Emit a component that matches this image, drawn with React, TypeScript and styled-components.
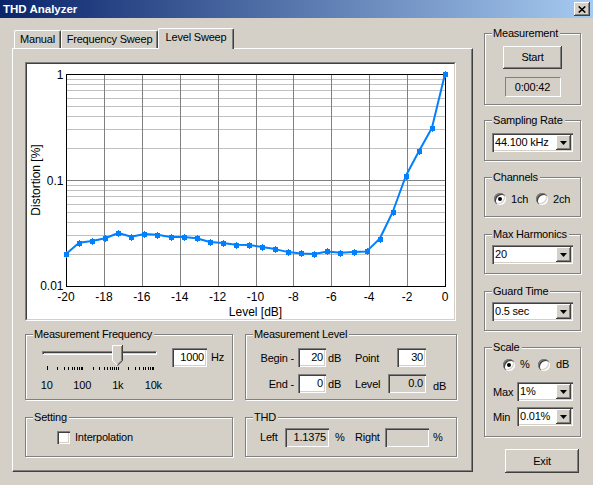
import React from "react";
import styled, { createGlobalStyle } from "styled-components";

const FACE = "#D4D0C8";
const SHADOW = "#808080";
const DARK = "#404040";
const HILITE = "#FFFFFF";

const SUNKEN = `inset 1px 1px ${SHADOW}, inset 2px 2px ${DARK}, inset -1px -1px ${HILITE}, inset -2px -2px ${FACE}`;
const RAISED = `inset -1px -1px ${DARK}, inset 1px 1px ${HILITE}, inset -2px -2px ${SHADOW}, inset 2px 2px ${FACE}`;

const GlobalStyle = createGlobalStyle`
  html, body { margin: 0; padding: 0; background: ${FACE}; }
  body {
    font-family: "Liberation Sans", Arial, sans-serif;
    font-size: 11px;
    letter-spacing: -0.2px;
    color: #000;
  }
  *, *::before, *::after { box-sizing: border-box; }
`;

const Window = styled.div`
  width: 593px;
  height: 485px;
  display: flex;
  flex-direction: column;
  background: ${FACE};
  overflow: hidden;
`;

const TitleBar = styled.div`
  flex: none;
  height: 18px;
  display: flex;
  align-items: center;
  justify-content: space-between;
  padding: 0 3px 0 3px;
  background: linear-gradient(to right, #0a246a 0%, #a6caf0 100%);
`;

const TitleText = styled.span`
  color: #fff;
  font-weight: bold;
  font-size: 11.5px;
  letter-spacing: 0;
  line-height: 14px;
`;

const CaptionButton = styled.div`
  width: 16px;
  height: 14px;
  background: ${FACE};
  box-shadow: inset -1px -1px ${DARK}, inset 1px 1px ${HILITE}, inset -2px -2px ${SHADOW};
  display: flex;
  align-items: center;
  justify-content: center;
`;

const Main = styled.div`
  flex: 1;
  display: flex;
  align-items: flex-start;
  padding: 10px 0 0 12px;
  gap: 11px;
`;

const LeftCol = styled.div`
  width: 461px;
  display: flex;
  flex-direction: column;
`;

const TabStrip = styled.div`
  height: 20px;
  display: flex;
  align-items: flex-end;
  padding-left: 2px;
  position: relative;
  z-index: 1;
`;

const Tab = styled.div<{ $w: number; $active?: boolean }>`
  width: ${(p) => p.$w}px;
  height: ${(p) => (p.$active ? 21 : 18)}px;
  margin-bottom: ${(p) => (p.$active ? -1 : 0)}px;
  background: ${FACE};
  border-top: 1px solid ${HILITE};
  border-left: 1px solid ${HILITE};
  border-right: 1px solid ${DARK};
  box-shadow: inset -1px 0 ${SHADOW};
  border-radius: 2px 2px 0 0;
  text-align: center;
  padding-top: 2px;
  line-height: 13px;
  white-space: nowrap;
`;

const TabPanel = styled.div`
  height: 424px;
  border: 1px solid;
  border-color: ${HILITE} ${DARK} ${DARK} ${HILITE};
  box-shadow: inset -1px -1px ${SHADOW};
  padding: 13px 0 0 12px;
  display: flex;
  flex-direction: column;
`;

const ChartFrame = styled.div`
  width: 431px;
  height: 259px;
  border: 1px solid;
  border-color: ${SHADOW} ${HILITE} ${HILITE} ${SHADOW};
`;

const ChartInner = styled.div`
  width: 100%;
  height: 100%;
  border: 1px solid;
  border-color: ${DARK} ${FACE} ${FACE} ${DARK};
  background: #fff;
  display: flex;
`;

const GroupRow = styled.div<{ $mt: number }>`
  display: flex;
  gap: 12px;
  margin-top: ${(p) => p.$mt}px;
`;

const Group = styled.div<{ $w: number; $h: number; $mt?: number }>`
  position: relative;
  flex: none;
  width: ${(p) => p.$w}px;
  height: ${(p) => p.$h}px;
  margin-top: ${(p) => p.$mt ?? 0}px;
  border: 1px solid ${SHADOW};
  box-shadow: inset 1px 1px ${HILITE}, 1px 1px ${HILITE};
`;

const Legend = styled.span`
  position: absolute;
  top: -8px;
  left: 7px;
  padding: 0 2px 0 1px;
  background: ${FACE};
  line-height: 14px;
  white-space: nowrap;
`;

/* ---------- left-bottom groups ---------- */

const FreqGroup = styled(Group)`
  display: flex;
  align-items: flex-start;
  padding: 10px 0 0 16px;
`;

const SliderBlock = styled.div`
  width: 115px;
  display: flex;
  flex-direction: column;
`;

const TrackArea = styled.div`
  position: relative;
  height: 21px;
`;

const Track = styled.div`
  margin-top: 6px;
  height: 4px;
  border: 1px solid;
  border-color: ${SHADOW} ${HILITE} ${HILITE} ${SHADOW};
  box-shadow: inset 1px 1px ${DARK};
  background: ${FACE};
`;

const Thumb = styled.svg`
  position: absolute;
  left: 70px;
  top: 0;
`;

const ScaleLabels = styled.div`
  display: flex;
  justify-content: space-between;
  width: 106.6px;
  margin-left: 4.7px;
  margin-top: 7px;
  line-height: 13px;
`;

const ScaleLabel = styled.span`
  width: 0;
  display: flex;
  justify-content: center;
  white-space: nowrap;
`;

const Edit = styled.div<{ $w: number; $ro?: boolean }>`
  flex: none;
  width: ${(p) => p.$w}px;
  height: 19px;
  background: ${(p) => (p.$ro ? FACE : "#fff")};
  box-shadow: ${SUNKEN};
  text-align: right;
  padding: 0 3px;
  line-height: 19px;
  white-space: nowrap;
`;

const FreqEdit = styled(Edit)`
  margin-top: 3px;
  margin-left: 15px;
`;

const Unit = styled.span<{ $ml?: number; $mt?: number }>`
  line-height: 19px;
  margin-left: ${(p) => p.$ml ?? 0}px;
  margin-top: ${(p) => p.$mt ?? 0}px;
  white-space: nowrap;
`;

const LevelGroup = styled(Group)`
  padding: 13px 0 0 1px;
`;

const LevelGrid = styled.div`
  display: grid;
  grid-template-columns: 51px 28px 29px 33px 38px auto;
  grid-auto-rows: 19px;
  row-gap: 7px;
  align-items: center;
`;

const FieldLabel = styled.span<{ $right?: boolean; $pl?: number; $pr?: number }>`
  text-align: ${(p) => (p.$right ? "right" : "left")};
  padding-left: ${(p) => p.$pl ?? 0}px;
  padding-right: ${(p) => p.$pr ?? 0}px;
  white-space: nowrap;
`;

const EndEdit = styled(Edit)`
  justify-self: end;
`;

const LowUnit = styled.span`
  padding: 4px 0 0 7px;
  align-self: center;
`;

const RowGroup = styled(Group)<{ $pl: number }>`
  display: flex;
  align-items: center;
  padding-left: ${(p) => p.$pl}px;
`;

const Check = styled.span`
  width: 13px;
  height: 13px;
  flex: none;
  background: #fff;
  box-shadow: ${SUNKEN};
`;

const FixedLabel = styled.span<{ $w: number; $pl?: number }>`
  width: ${(p) => p.$w}px;
  padding-left: ${(p) => p.$pl ?? 0}px;
  flex: none;
  white-space: nowrap;
`;

/* ---------- right column ---------- */

const RightCol = styled.div`
  width: 97px;
  margin-top: 5px;
  display: flex;
  flex-direction: column;
`;

const MeasureGroup = styled(Group)`
  display: flex;
  flex-direction: column;
  align-items: center;
  padding-top: 12px;
`;

const PushButton = styled.div<{ $w: number; $h: number }>`
  flex: none;
  width: ${(p) => p.$w}px;
  height: ${(p) => p.$h}px;
  display: flex;
  align-items: center;
  justify-content: center;
  background: ${FACE};
  box-shadow: ${RAISED};
  padding-bottom: 1px;
`;

const ExitButton = styled(PushButton)`
  margin-top: 12px;
  margin-left: 21px;
`;

const Timer = styled.div`
  width: 56px;
  height: 20px;
  margin-top: 8px;
  border: 1px solid;
  border-color: ${SHADOW} ${HILITE} ${HILITE} ${SHADOW};
  display: flex;
  align-items: center;
  justify-content: center;
`;

const ComboGroup = styled(Group)<{ $pt: number }>`
  padding: ${(p) => p.$pt}px 0 0 7px;
`;

const Combo = styled.div<{ $w: number }>`
  flex: none;
  width: ${(p) => p.$w}px;
  height: 19px;
  background: #fff;
  box-shadow: ${SUNKEN};
  padding: 2px;
  display: flex;
`;

const ComboText = styled.span`
  flex: 1;
  line-height: 15px;
  padding-left: 1px;
  white-space: nowrap;
  overflow: hidden;
`;

const ComboButton = styled.span`
  width: 15px;
  height: 15px;
  flex: none;
  background: ${FACE};
  box-shadow: ${RAISED};
  display: flex;
  align-items: center;
  justify-content: center;
`;

const RadioRow = styled.div<{ $pl: number }>`
  display: flex;
  align-items: center;
  height: 13px;
  padding-left: ${(p) => p.$pl}px;
`;

const ChannelsGroup = styled(Group)`
  display: flex;
  align-items: center;
  padding-top: 4px;
`;

const Radio = styled.span<{ $on?: boolean; $ml?: number }>`
  position: relative;
  width: 12px;
  height: 12px;
  flex: none;
  border-radius: 50%;
  background: #fff;
  margin-left: ${(p) => p.$ml ?? 0}px;
  box-shadow: ${SUNKEN};
  &::after {
    content: "";
    display: ${(p) => (p.$on ? "block" : "none")};
    position: absolute;
    left: 4px;
    top: 4px;
    width: 4px;
    height: 4px;
    border-radius: 50%;
    background: #000;
  }
`;

const RadioText = styled.span<{ $w: number; $ml: number }>`
  width: ${(p) => p.$w}px;
  margin-left: ${(p) => p.$ml}px;
  flex: none;
  line-height: 13px;
`;

const ScaleGroup = styled(Group)`
  padding-top: 10px;
`;

const ScaleRow = styled.div<{ $mt: number }>`
  display: flex;
  align-items: center;
  padding-left: 8px;
  margin-top: ${(p) => p.$mt}px;
`;

/* ---------- chart ---------- */

const DATA = [
  0.02, 0.0256, 0.0266, 0.0282, 0.0316, 0.0292, 0.031, 0.0305, 0.029, 0.029,
  0.0282, 0.026, 0.0255, 0.0245, 0.0244, 0.0233, 0.0223, 0.0209, 0.0203, 0.02,
  0.0212, 0.0206, 0.0209, 0.0212, 0.0279, 0.0499, 0.109, 0.187, 0.31, 1.0,
];

const PL = 39;
const PR = 418;
const PT = 10;
const PB = 222;
const xOf = (db: number) => PL + ((db + 20) / 20) * (PR - PL);
const yOf = (v: number) => PT + (-Math.log10(v) / 2) * (PB - PT);
const px = (v: number) => Math.round(v) + 0.5;

function Chart() {
  const minor: number[] = [];
  [0.01, 0.1].forEach((dec) => {
    for (let k = 2; k <= 9; k++) minor.push(px(yOf(dec * k)));
  });
  const verts: number[] = [];
  for (let d = -18; d <= -2; d += 2) verts.push(px(xOf(d)));
  const xLabels: number[] = [];
  for (let d = -20; d <= 0; d += 2) xLabels.push(d);
  const pts = DATA.map((v, i) => [xOf(-20 + (i * 20) / 29), yOf(v)] as const);
  const line = pts.map(([x, y], i) => `${i ? "L" : "M"}${x.toFixed(1)} ${y.toFixed(1)}`).join(" ");
  const textStyle = { fontFamily: '"Liberation Sans", Arial, sans-serif', fontSize: 12, letterSpacing: 0 };

  return (
    <svg width="427" height="255" viewBox="0 0 427 255">
      {minor.map((y, i) => (
        <line key={"m" + i} x1={PL} x2={PR} y1={y} y2={y} stroke="#C0C0C0" strokeWidth="1" />
      ))}
      {verts.map((x, i) => (
        <line key={"v" + i} x1={x} x2={x} y1={PT} y2={PB} stroke="#808080" strokeWidth="1" />
      ))}
      <line x1={PL} x2={PR} y1={px(yOf(0.1))} y2={px(yOf(0.1))} stroke="#808080" strokeWidth="1" />
      <rect x={PL + 0.5} y={PT + 0.5} width={PR - PL} height={PB - PT} fill="none" stroke="#000" strokeWidth="1" />
      <path d={line} fill="none" stroke="#0080FF" strokeWidth="2" strokeLinejoin="round" />
      {pts.map(([x, y], i) => (
        <g key={"p" + i} fill="#0080FF" shapeRendering="crispEdges">
          <rect x={Math.round(x) - 2} y={Math.round(y) - 2} width="5" height="5" />
          <rect x={Math.round(x)} y={Math.round(y) - 3} width="1" height="7" />
        </g>
      ))}
      <g style={textStyle} fill="#000">
        <text x="36.5" y="15" textAnchor="end">1</text>
        <text x="36.5" y="120.5" textAnchor="end">0.1</text>
        <text x="36.5" y="226" textAnchor="end">0.01</text>
        {xLabels.map((d) => (
          <text key={d} x={xOf(d)} y="237" textAnchor="middle">
            {d}
          </text>
        ))}
        <text x={(PL + PR) / 2} y="252" textAnchor="middle">Level [dB]</text>
        <text x="0" y="0" textAnchor="middle" transform="translate(13 116) rotate(-90)">
          Distortion [%]
        </text>
      </g>
    </svg>
  );
}

function SliderTicks() {
  const ticks: number[] = [];
  for (let d = 0; d < 3; d++) for (let k = 1; k <= 9; k++) ticks.push(d + Math.log10(k));
  ticks.push(3);
  return (
    <svg width="115" height="6" viewBox="0 0 115 6">
      {ticks.map((t, i) => {
        const x = Math.round(4.7 + t * 35.53) + 0.5;
        return <line key={i} x1={x} x2={x} y1={i === 0 ? 0 : 1} y2={4} stroke="#000" strokeWidth="1" />;
      })}
    </svg>
  );
}

function ThumbShape() {
  return (
    <Thumb width="11" height="21" viewBox="0 0 11 21">
      <polygon points="0,0 11,0 11,16 5.5,21 0,16" fill={FACE} />
      <polyline points="0.5,16 0.5,0.5 10,0.5" fill="none" stroke={HILITE} />
      <line x1="0.5" y1="15.5" x2="5" y2="20" stroke={HILITE} />
      <polyline points="10.5,0 10.5,15.7 5.5,20.7" fill="none" stroke={DARK} />
      <polyline points="9.5,1 9.5,15.3 5.5,19.3" fill="none" stroke={SHADOW} />
    </Thumb>
  );
}

function Arrow() {
  return (
    <svg width="7" height="4" viewBox="0 0 7 4">
      <polygon points="0,0 7,0 3.5,4" fill="#000" />
    </svg>
  );
}

function DropDown({ w, value }: { w: number; value: string }) {
  return (
    <Combo $w={w}>
      <ComboText>{value}</ComboText>
      <ComboButton>
        <Arrow />
      </ComboButton>
    </Combo>
  );
}

export default function App() {
  return (
    <>
      <GlobalStyle />
      <Window>
        <TitleBar>
          <TitleText>THD Analyzer</TitleText>
          <CaptionButton>
            <svg width="8" height="7" viewBox="0 0 8 7">
              <path d="M0.7 0.5 L7.3 6.5 M7.3 0.5 L0.7 6.5" stroke="#000" strokeWidth="1.6" />
            </svg>
          </CaptionButton>
        </TitleBar>
        <Main>
          <LeftCol>
            <TabStrip>
              <Tab $w={47}>Manual</Tab>
              <Tab $w={97}>Frequency Sweep</Tab>
              <Tab $w={76} $active>
                Level Sweep
              </Tab>
            </TabStrip>
            <TabPanel>
              <ChartFrame>
                <ChartInner>
                  <Chart />
                </ChartInner>
              </ChartFrame>

              <GroupRow $mt={13}>
                <FreqGroup $w={208} $h={66}>
                  <Legend>Measurement Frequency</Legend>
                  <SliderBlock>
                    <TrackArea>
                      <Track />
                      <ThumbShape />
                    </TrackArea>
                    <SliderTicks />
                    <ScaleLabels>
                      <ScaleLabel>10</ScaleLabel>
                      <ScaleLabel>100</ScaleLabel>
                      <ScaleLabel>1k</ScaleLabel>
                      <ScaleLabel>10k</ScaleLabel>
                    </ScaleLabels>
                  </SliderBlock>
                  <FreqEdit $w={35}>1000</FreqEdit>
                  <Unit $ml={4} $mt={3}>
                    Hz
                  </Unit>
                </FreqGroup>

                <LevelGroup $w={212} $h={66}>
                  <Legend>Measurement Level</Legend>
                  <LevelGrid>
                    <FieldLabel $right $pr={4}>
                      Begin -
                    </FieldLabel>
                    <Edit $w={28}>20</Edit>
                    <FieldLabel $pl={2}>dB</FieldLabel>
                    <FieldLabel>Point</FieldLabel>
                    <EndEdit $w={29}>30</EndEdit>
                    <span />
                    <FieldLabel $right $pr={4}>
                      End -
                    </FieldLabel>
                    <Edit $w={28}>0</Edit>
                    <FieldLabel $pl={2}>dB</FieldLabel>
                    <FieldLabel>Level</FieldLabel>
                    <Edit $w={38} $ro>
                      0.0
                    </Edit>
                    <LowUnit>dB</LowUnit>
                  </LevelGrid>
                </LevelGroup>
              </GroupRow>

              <GroupRow $mt={17}>
                <RowGroup $w={208} $h={40} $pl={31}>
                  <Legend>Setting</Legend>
                  <Check />
                  <FixedLabel $w={80} $pl={5}>
                    Interpolation
                  </FixedLabel>
                </RowGroup>
                <RowGroup $w={212} $h={40} $pl={14}>
                  <Legend>THD</Legend>
                  <FixedLabel $w={25}>Left</FixedLabel>
                  <Edit $w={44} $ro>
                    1.1375
                  </Edit>
                  <FixedLabel $w={26} $pl={6}>
                    %
                  </FixedLabel>
                  <FixedLabel $w={30}>Right</FixedLabel>
                  <Edit $w={44} $ro />
                  <FixedLabel $w={14} $pl={4}>
                    %
                  </FixedLabel>
                </RowGroup>
              </GroupRow>
            </TabPanel>
          </LeftCol>

          <RightCol>
            <MeasureGroup $w={97} $h={72}>
              <Legend>Measurement</Legend>
              <PushButton $w={59} $h={23}>
                Start
              </PushButton>
              <Timer>0:00:42</Timer>
            </MeasureGroup>

            <ComboGroup $w={97} $h={41} $mt={15} $pt={12}>
              <Legend>Sampling Rate</Legend>
              <DropDown w={81} value="44.100 kHz" />
            </ComboGroup>

            <ChannelsGroup $w={97} $h={40} $mt={16}>
              <Legend>Channels</Legend>
              <RadioRow $pl={9}>
                <Radio $on />
                <RadioText $w={20} $ml={5}>
                  1ch
                </RadioText>
                <Radio $ml={5} />
                <RadioText $w={24} $ml={5}>
                  2ch
                </RadioText>
              </RadioRow>
            </ChannelsGroup>

            <ComboGroup $w={97} $h={40} $mt={17} $pt={10}>
              <Legend>Max Harmonics</Legend>
              <DropDown w={81} value="20" />
            </ComboGroup>

            <ComboGroup $w={97} $h={40} $mt={17} $pt={10}>
              <Legend>Guard Time</Legend>
              <DropDown w={81} value="0.5 sec" />
            </ComboGroup>

            <ScaleGroup $w={97} $h={90} $mt={16}>
              <Legend>Scale</Legend>
              <RadioRow $pl={18}>
                <Radio $on />
                <RadioText $w={18} $ml={5}>
                  %
                </RadioText>
                <Radio />
                <RadioText $w={20} $ml={6}>
                  dB
                </RadioText>
              </RadioRow>
              <ScaleRow $mt={11}>
                <FixedLabel $w={24}>Max</FixedLabel>
                <DropDown w={56} value="1%" />
              </ScaleRow>
              <ScaleRow $mt={6}>
                <FixedLabel $w={24}>Min</FixedLabel>
                <DropDown w={56} value="0.01%" />
              </ScaleRow>
            </ScaleGroup>

            <ExitButton $w={74} $h={24}>
              Exit
            </ExitButton>
          </RightCol>
        </Main>
      </Window>
    </>
  );
}
